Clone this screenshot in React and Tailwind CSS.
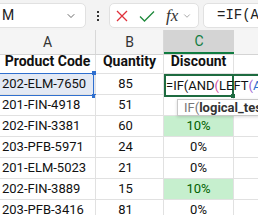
import React from 'react';
import { ChevronDown } from 'lucide-react';

const rows = [
  { code: '202-ELM-7650', qty: 85, disc: null, ref: true },
  { code: '201-FIN-4918', qty: 51, disc: null },
  { code: '202-FIN-3381', qty: 60, disc: '10%', good: true },
  { code: '203-PFB-5971', qty: 24, disc: '0%' },
  { code: '201-ELM-5023', qty: 21, disc: '0%' },
  { code: '202-FIN-3889', qty: 15, disc: '10%', good: true },
  { code: '203-PFB-3416', qty: 81, disc: '0%' },
];

const cellFont = { fontFamily: 'Roboto, "Liberation Sans", sans-serif' };

const Toolbar = () => (
  <div className="h-[30px] bg-[#f3f3f3] flex items-start pt-[3px]">
    <div className="h-[25px] w-[96px] ml-[-10px] bg-white border border-[#e1e1e1] rounded-[5px] flex items-center justify-between pl-[11px] pr-[8px] text-[14px] text-[#222]" style={cellFont}>
      <span>M</span>
      <ChevronDown size={12} strokeWidth={1.6} className="text-[#444]" />
    </div>
    <div className="w-[23px] h-[25px] flex flex-col items-center justify-center gap-[2px]">
      <span className="w-[2px] h-[2px] bg-[#333]" />
      <span className="w-[2px] h-[2px] bg-[#333]" />
      <span className="w-[2px] h-[2px] bg-[#333]" />
    </div>
    <div className="h-[25px] w-[90px] bg-white border border-[#e1e1e1] rounded-[5px] flex items-center pl-[5px]">
      <svg width="12" height="12" viewBox="0 0 12 12" className="ml-[1px]">
        <path d="M1 1 L11 11 M11 1 L1 11" stroke="#e0303a" strokeWidth="1.3" fill="none" />
      </svg>
      <svg width="16" height="12" viewBox="0 0 16 12" className="ml-[11px]">
        <path d="M1 6.5 L5.5 11 L15 1.5" stroke="#1f8a3c" strokeWidth="1.3" fill="none" />
      </svg>
      <span className="ml-[11px] text-[17px] italic text-[#333] leading-none" style={{ fontFamily: '"Liberation Serif", serif' }}>fx</span>
      <ChevronDown size={10} strokeWidth={1.5} className="ml-[4px] text-[#777]" />
    </div>
    <div className="h-[25px] flex-1 ml-[4px] mr-[-10px] bg-white border border-[#e1e1e1] rounded-[5px] flex items-center pl-[13px] text-[14px] text-[#222] overflow-hidden whitespace-nowrap" style={{ fontFamily: '"Liberation Mono", monospace' }}>
      =IF(AND(LEFT(A2
    </div>
  </div>
);

const ColHeaders = () => (
  <div className="h-[25px] flex bg-[#f5f5f5] border-b border-[#d4d4d4] text-[14px] text-[#333]" style={cellFont}>
    <div className="w-[96px] border-r border-[#d8d8d8] flex items-center justify-center">A</div>
    <div className="w-[68px] border-r border-[#d8d8d8] flex items-center justify-center">B</div>
    <div className="w-[70px] bg-[#d4d4d4] border-b-2 border-[#107c41] text-[#107c41] flex items-center justify-center">C</div>
    <div className="flex-1" />
  </div>
);

const Row = ({ r, i }) => (
  <div className="h-[21px] flex border-b border-[#e1e1e1] text-[13px] text-[#111]" style={cellFont}>
    <div className={`relative w-[96px] border-r border-[#e1e1e1] flex items-center pl-[2px] ${r.ref ? 'bg-[#e3e9f4]' : ''}`}>
      {r.code}
      {r.ref && (
        <>
          <div className="absolute left-[-2px] right-[1px] top-[-1px] bottom-[-2px] border-[1.5px] border-[#2f6fcf]" />
          <div className="absolute right-[-1px] top-[-3px] w-[4px] h-[4px] bg-[#2f6fcf]" />
          <div className="absolute right-[-1px] bottom-[-4px] w-[4px] h-[4px] bg-[#2f6fcf]" />
        </>
      )}
    </div>
    <div className="w-[68px] border-r border-[#e1e1e1] flex items-center justify-center pr-[8px]">{r.qty}</div>
    <div className={`relative w-[70px] border-r border-[#e1e1e1] flex items-center justify-center ${r.good ? 'bg-[#c6efce] text-[#006100]' : ''}`}>
      {r.disc}
      {i === 0 && (
        <div className="absolute left-0 top-0 w-[94px] h-[23px] z-10 whitespace-nowrap overflow-visible">
          <div className="absolute left-0 top-0 w-[70px] h-[23px] border-2 border-[#1e6b40] bg-white" />
          <div className="absolute left-[70px] top-0 w-[24px] h-[23px] border-t-2 border-[#1e6b40] bg-white" />
          <div className="absolute left-[67px] top-[20px] w-[4px] h-[4px] bg-[#1e6b40]" />
          <div className="absolute left-[2px] top-0 h-[23px] flex items-center text-[13px] text-[#111]">
            =IF(AND<span className="text-[#d0489a]">(</span>LEFT<span className="text-[#9a5ad0]">(</span><span className="text-[#2f6fcf]">A2</span>
          </div>
        </div>
      )}
    </div>
    <div className="flex-1" />
  </div>
);

export default function App() {
  return (
    <div className="w-[258px] h-[215px] overflow-hidden bg-white relative">
      <Toolbar />
      <ColHeaders />
      <div className="h-[19px] flex border-b border-[#e1e1e1] text-[14px] font-bold text-[#111]" style={cellFont}>
        <div className="w-[96px] border-r border-[#e1e1e1] flex items-end justify-center pb-[1px]">Product Code</div>
        <div className="w-[68px] border-r border-[#e1e1e1] flex items-end justify-center pb-[1px]">Quantity</div>
        <div className="w-[70px] border-r border-[#e1e1e1] flex items-end justify-center pb-[1px]">Discount</div>
        <div className="flex-1" />
      </div>
      {rows.map((r, i) => (
        <Row key={r.code} r={r} i={i} />
      ))}
      <div className="absolute left-[177px] top-[99px] h-[17px] pr-[10px] pl-[6px] bg-white border border-[#c8c8c8] shadow-[0_1px_3px_rgba(0,0,0,0.15)] flex items-center text-[13px] whitespace-nowrap z-20" style={cellFont}>
        <span className="text-[#777]">IF(</span>
        <span className="font-bold text-[#333]">logical_test</span>
      </div>
    </div>
  );
}
